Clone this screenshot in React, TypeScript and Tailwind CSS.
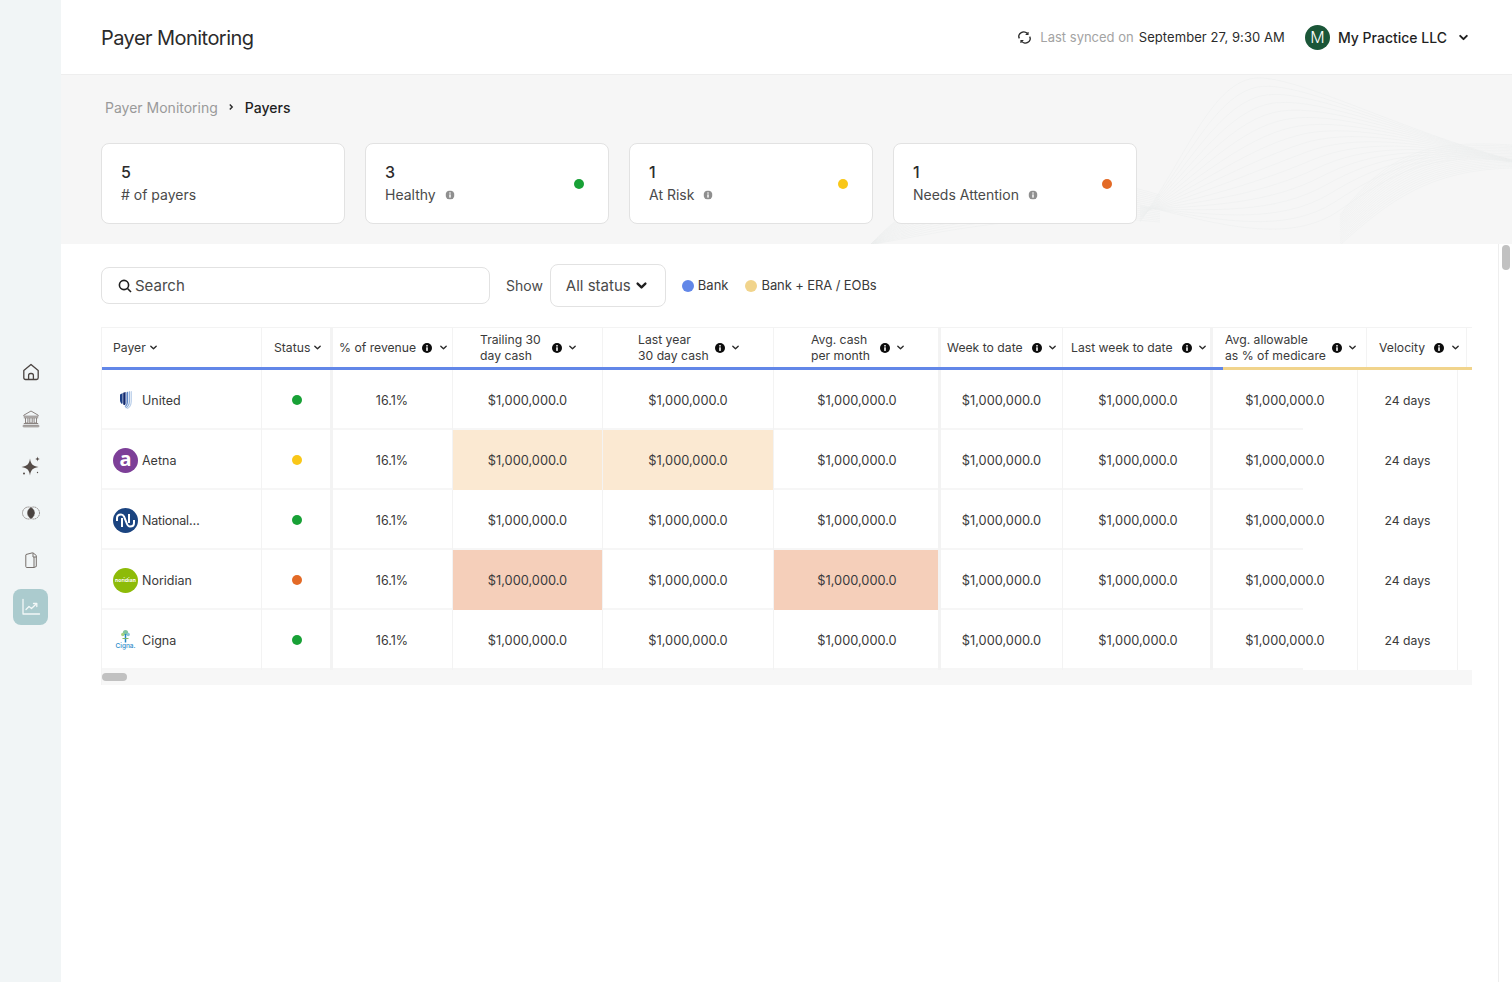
import React from "react";

const BODY = "grid grid-cols-[160px_71px_120px_150px_171px_167px_122px_150px_145px_100px_14px]";
const HEAD = "grid grid-cols-[160px_71px_120px_150px_171px_167px_122px_150px_154px_100px_5px]";

function Chevron({ className = "w-[9px] h-[9px]", sw = 2 }: { className?: string; sw?: number }) {
  return (
    <svg viewBox="0 0 10 10" className={className} fill="none" stroke="currentColor" strokeWidth={sw} strokeLinecap="round" strokeLinejoin="round">
      <path d="M2 3.5 5 6.5 8 3.5" />
    </svg>
  );
}

function Info({ gray = false }: { gray?: boolean }) {
  return (
    <svg viewBox="0 0 10 10" className="w-[10px] h-[10px] shrink-0">
      <circle cx="5" cy="5" r="5" fill={gray ? "#8f8f8f" : "#0c0c0c"} />
      <rect x="4.2" y="4.3" width="1.6" height="3.6" fill="#fff" />
      <rect x="4.2" y="2.1" width="1.6" height="1.4" fill="#fff" />
    </svg>
  );
}

function Dot({ c, size = "w-[10px] h-[10px]" }: { c: string; size?: string }) {
  return <span className={`${size} rounded-full inline-block shrink-0 ${c}`} />;
}

function United() {
  return (
    <svg viewBox="0 0 14 18" className="w-[14px] h-[18px]">
      <path d="M1 3.5C2 3 3 2.5 3.6 2V12L3 13C2 12.5 1 11 1 9Z" fill="#1b3f87" />
      <path d="M4.2 1.8 6.6 1V12.5C6.6 13.5 6 14 5 14L4.2 13.4Z" fill="#12296f" />
      <path d="M7.4 1.4 9 .6V11C9 13 8 15 6.5 16L5.5 15C7 14.5 7.4 13.5 7.4 12Z" fill="#5f86c6" />
      <path d="M9.7.8 10.9 0V11C10.9 14 9 16.5 7 17.5L6.2 16.6C8.5 15.5 9.7 13.5 9.7 11Z" fill="#8fb0dc" />
      <path d="M11.6.6 12.8 0V10.5C12.8 14.5 10.5 17 8.5 18L7.6 17.6C10 16.4 11.6 14 11.6 11Z" fill="#b5cbe8" />
    </svg>
  );
}

function Aetna() {
  return (
    <span className="w-[25px] h-[25px] rounded-full bg-[#7d3f98] text-white flex items-center justify-center font-bold text-[20px] leading-none pb-[3px] font-['Noto_Sans',sans-serif]">
      a
    </span>
  );
}

function National() {
  return (
    <svg viewBox="0 0 25 25" className="w-[25px] h-[25px]">
      <circle cx="12.5" cy="12.5" r="12.5" fill="#1b4480" />
      <path d="M4 13V10Q4 6.500 8 6.500Q10 6.500 11 8.500L14 16Q15 18.500 17 18.500Q21 18.500 21 15V12" fill="none" stroke="#fff" strokeWidth="2" />
      <path d="M9 10v9M16 6v9" stroke="#fff" strokeWidth="2" fill="none" />
    </svg>
  );
}

function Noridian() {
  return (
    <span className="w-[25px] h-[25px] rounded-full bg-[#8dbb08] text-white flex flex-col items-center justify-center overflow-hidden text-[5px] leading-none font-bold tracking-[0.1px]">
      noridian
    </span>
  );
}

function Cigna() {
  return (
    <svg viewBox="0 0 25 25" className="w-[25px] h-[25px]">
      <circle cx="12.5" cy="4.500" r="2.600" fill="#7fc4a0" />
      <circle cx="9.800" cy="6.500" r="1.700" fill="#a8d27f" />
      <circle cx="15.200" cy="6.500" r="1.700" fill="#8cc6d6" />
      <path d="M12.500 6v8.500" stroke="#1f87c4" strokeWidth="1.500" />
      <path d="M9.500 10.500h6" stroke="#7fb96a" strokeWidth="1" />
      <text x="12.5" y="19.500" textAnchor="middle" fontSize="6.500" fontWeight="500" fill="#2a8bc9" fontFamily="Inter, sans-serif">Cigna.</text>
    </svg>
  );
}

function Side({ children, active = false }: { children: React.ReactNode; active?: boolean }) {
  return (
    <div className={`w-[35px] h-[36px] rounded-lg flex items-center justify-center ${active ? "bg-[#abcbce]" : ""}`}>
      {children}
    </div>
  );
}

function Sidebar() {
  return (
    <aside className="w-[61px] shrink-0 bg-[#f1f5f6] flex flex-col items-center pt-[354px] gap-[11px] h-full">
      <Side>
        <svg viewBox="0 0 18 18" className="w-[18px] h-[18px]" fill="none" stroke="#4a4340" strokeWidth="1.3" strokeLinejoin="round">
          <path d="M1.8 7.4 9 1.5l7.2 5.9v7.4a1.7 1.7 0 0 1-1.7 1.7h-11a1.7 1.7 0 0 1-1.7-1.7Z" />
          <path d="M6.6 16.5v-4a2 2 0 0 1 2-2h.8a2 2 0 0 1 2 2v4" />
        </svg>
      </Side>
      <Side>
        <svg viewBox="0 0 18 18" className="w-[18px] h-[18px]" fill="none" stroke="#8a8380" strokeWidth="1">
          <path d="M9 1 1.8 5.2v1h14.4v-1Z" />
          <path d="M1.8 7.8h14.4M3.5 8v5h2.4V8M7.8 8v5h2.4V8M12.1 8v5h2.4V8M1.8 13.5h14.4" />
          <rect x="1" y="15.3" width="16" height="1.5" rx=".7" />
        </svg>
      </Side>
      <Side>
        <svg viewBox="0 0 20 20" className="w-[20px] h-[20px]" fill="#554c48">
          <path d="M9 2.500C9.800 8 11.500 10 17.500 11 11.500 12 9.800 14 9 19.500 8.200 14 6.500 12 .5 11 6.500 10 8.200 8 9 2.500Z" />
          <path d="M16.500.5c.2 1.600.8 2.300 2.500 2.500-1.700.2-2.300.9-2.500 2.500-.2-1.600-.8-2.300-2.500-2.500C15.700 2.800 16.300 2.100 16.500.5Z" />
          <circle cx="3" cy="17.500" r="1" />
          <circle cx="16.500" cy="16.500" r=".7" />
        </svg>
      </Side>
      <Side>
        <svg viewBox="0 0 18 18" className="w-[18px] h-[18px]" fill="none">
          <circle cx="6.500" cy="9" r="6" stroke="#8a8380" strokeWidth="1" strokeDasharray="1.500 .7" />
          <circle cx="11.500" cy="9" r="6" stroke="#8a8380" strokeWidth="1" strokeDasharray="1.500 .7" />
          <path d="M9 3.500c2.300 1.300 3.500 3.300 3.500 5.500s-1.200 4.200-3.500 5.500C6.700 13.200 5.500 11.200 5.500 9s1.200-4.200 3.500-5.500Z" fill="#4a4340" />
        </svg>
      </Side>
      <Side>
        <svg viewBox="0 0 18 18" className="w-[18px] h-[18px]" fill="none" stroke="#77706c" strokeWidth="1" strokeLinejoin="round">
          <path d="M4 3.500 10.500 1.800H11L14.300 4.500V15.500L12 16.500 4.800 16.500A1 1 0 0 1 3.800 15.500V4Z" />
          <path d="M11 2v4h3.300M12 6v10.300" />
        </svg>
      </Side>
      <Side active>
        <svg viewBox="0 0 20 20" className="w-[20px] h-[20px]" fill="none" stroke="#f3f8f8" strokeWidth="1.300" strokeLinecap="round" strokeLinejoin="round">
          <path d="M2 2.500V17h16.500" />
          <path d="M5 12.500 8 9.500l2.500 2L15.500 6.800" />
          <path d="M12.500 6.500h3.300v3" />
        </svg>
      </Side>
    </aside>
  );
}

function Header() {
  return (
    <header className="h-[75px] shrink-0 border-b border-[#eeeeee] flex items-center pl-[40px] pr-[43px] bg-white">
      <h1 className="text-[20px] text-[#2b2b2b] tracking-[-0.55px] font-normal pt-[2px]">Payer Monitoring</h1>
      <div className="ml-auto flex items-center text-[13px]">
        <svg viewBox="0 0 14 14" className="w-[13px] h-[13px] mr-[9px]" fill="none" stroke="#2b2b2b" strokeWidth="1.500">
          <path d="M1.500 8A5 4.500 0 0 1 10.500 3.500M12.500 6A5 4.500 0 0 1 3.500 10.500" />
          <path d="M10.800 1v2.800H8.200M3.200 13v-2.800h2.600" strokeWidth="1.200" />
        </svg>
        <span className="text-[#a3a3a3] pt-[2px]">Last synced on</span>
        <span className="text-[#2b2b2b] ml-[5px] pt-[2px] tracking-[0.08px]">September 27, 9:30 AM</span>
        <span className="w-[25px] h-[25px] rounded-full bg-[#1b5638] text-white flex items-center justify-center text-[16px] ml-[20px] font-light">M</span>
        <span className="ml-[8px] text-[14px] font-medium text-[#1f1f1f]">My Practice LLC</span>
        <Chevron className="w-[11px] h-[11px] ml-[11px] text-[#1f1f1f]" sw={1.800} />
      </div>
    </header>
  );
}

function Waves() {
  const n = 16;
  const paths: string[] = [];
  const lerp = (a: number, b: number, t: number) => a + (b - a) * t;
  const A = [1140, 222, 1190, 150, 1215, 75, 1262, 78, 1330, 82, 1400, 130, 1512, 160];
  const B = [1140, 205, 1220, 225, 1290, 245, 1340, 210, 1380, 175, 1430, 150, 1512, 162];
  for (let i = 0; i <= n; i++) {
    const t = i / n;
    const p = A.map((v, k) => lerp(v, B[k], t) - (k % 2 ? 0 : 61));
    paths.push(`M${p[0]} ${p[1]}C${p[2]} ${p[3]} ${p[4]} ${p[5]} ${p[6]} ${p[7]}S${p[10]} ${p[11]} ${p[12]} ${p[13]}`);
    paths.push(`M${1340 - 61} ${lerp(245, 215, t)}C${1390 - 61} ${lerp(200, 150, t)} ${1430 - 61} ${lerp(170, 140, t)} ${1512 - 61} ${lerp(168, 145, t)}`);
    paths.push(`M${870 - 61} ${245}C${950 - 61} ${lerp(160, 230, t)} ${1040 - 61} ${lerp(160, 210, t)} ${1160 - 61} ${lerp(195, 222, t)}`);
  }
  return (
    <svg className="absolute left-0 top-0 w-[1451px] h-[169px] pointer-events-none" viewBox="0 75 1451 169" fill="none" stroke="#eceeee" strokeWidth="0.550">
      {paths.map((d, i) => (
        <path key={i} d={d} />
      ))}
    </svg>
  );
}

function Stat({ n, label, dot, info = true }: { n: string; label: string; dot?: string; info?: boolean }) {
  return (
    <div className="w-[244px] h-[81px] bg-white border border-[#e2e2e2] rounded-lg flex items-center pl-[19px] pr-[24px] justify-between relative">
      <div>
        <div className="text-[16px] font-medium leading-[23px] text-[#2b2b2b]">{n}</div>
        <div className="flex items-center gap-[9px] text-[14px] leading-[22px] text-[#4a4a4a]">
          {label}
          {info && <span className="scale-90 flex"><Info gray /></span>}
        </div>
      </div>
      {dot && <Dot c={dot} />}
    </div>
  );
}

function Top() {
  return (
    <section className="relative h-[169px] shrink-0 bg-[#f6f6f6] pl-[40px] overflow-hidden">
      <Waves />
      <div className="relative flex items-center h-[64px] mb-[4px] pl-[4px] text-[14px] gap-[8.500px]">
        <span className="text-[#9a9a9a]">Payer Monitoring</span>
        <svg viewBox="0 0 10 10" className="w-[8px] h-[8px] mx-[1px]" fill="none" stroke="#2b2b2b" strokeWidth="1.800"><path d="M3.500 2 6.500 5 3.500 8" /></svg>
        <span className="text-[#1f1f1f] font-medium">Payers</span>
      </div>
      <div className="relative flex gap-[20px]">
        <Stat n="5" label="# of payers" info={false} />
        <Stat n="3" label="Healthy" dot="bg-[#18a136]" />
        <Stat n="1" label="At Risk" dot="bg-[#f9c718]" />
        <Stat n="1" label="Needs Attention" dot="bg-[#e36a26]" />
      </div>
    </section>
  );
}

function Toolbar() {
  return (
    <div className="flex items-center h-[43px] text-[#2b2b2b]">
      <div className="w-[389px] h-[37px] border border-[#e2e2e2] rounded-lg flex items-center pl-[16px] gap-[3px]">
        <svg viewBox="0 0 14 14" className="w-[14px] h-[14px]" fill="none" stroke="#1f1f1f" strokeWidth="1.600"><circle cx="6" cy="6" r="4.600" /><path d="m9.500 9.500 3.500 3.500" /></svg>
        <span className="text-[15px] text-[#4a4a4a] pt-[1px]">Search</span>
      </div>
      <span className="ml-[16px] text-[14px] text-[#4a4a4a]">Show</span>
      <div className="ml-[7px] w-[116px] h-[43px] border border-[#e2e2e2] rounded-lg flex items-center pl-[15px] gap-[4px] text-[15px] text-[#4a4a4a]">
        <span className="pt-[1px]">All status</span>
        <Chevron className="w-[13px] h-[13px] text-[#1f1f1f]" sw={1.800} />
      </div>
      <Dot c="bg-[#6287e8] ml-[16px]" size="w-[12px] h-[12px]" />
      <span className="ml-[4px] text-[13px] text-[#3a3a3a]">Bank</span>
      <Dot c="bg-[#f1d48c] ml-[17px]" size="w-[12px] h-[12px]" />
      <span className="ml-[4px] text-[13px] text-[#3a3a3a] tracking-[-0.1px]">Bank + ERA / EOBs</span>
    </div>
  );
}

type H = { l: string[]; info?: boolean; border?: string; pad?: string; gap?: string };
const heads: H[] = [
  { l: ["Payer"], pad: "pl-[11px]" },
  { l: ["Status"], pad: "pl-[12px]", border: "border-r-[3px]" },
  { l: ["% of revenue"], info: true, pad: "pl-[6px]" },
  { l: ["Trailing 30", "day cash"], info: true, pad: "pl-[27px]", gap: "ml-[11px]" },
  { l: ["Last year", "30 day cash"], info: true, pad: "pl-[35px]" },
  { l: ["Avg. cash", "per month"], info: true, pad: "pl-[37px]", border: "border-r-[3px]", gap: "ml-[10px]" },
  { l: ["Week to date"], info: true, pad: "pl-[6px]", gap: "ml-[9px]" },
  { l: ["Last week to date"], info: true, pad: "pl-[8px]", border: "border-r-[3px]", gap: "ml-[9px]" },
  { l: ["Avg. allowable", "as % of medicare"], info: true, pad: "pl-[12px]" },
  { l: ["Velocity"], info: true, pad: "pl-[12px]", gap: "ml-[9px]" },
];

function HeadCell({ h }: { h: H }) {
  return (
    <div className={`h-[39px] flex items-center border-[#f3f3f3] ${h.border ?? "border-r-[1px]"} ${h.pad}`}>
      <div className="text-[12.200px] leading-[16px] text-[#3a3a3a] whitespace-nowrap">
        {h.l.map((x) => (
          <div key={x}>{x}</div>
        ))}
      </div>
      {h.info && <span className={h.gap ?? "ml-[6px]"}><Info /></span>}
      <Chevron className={`w-[9px] h-[9px] text-[#2b2b2b] ${h.info ? "ml-[6.500px]" : "ml-[3px]"}`} sw={1.500} />
    </div>
  );
}

type Row = { name: string; nameClass?: string; logo: React.ReactNode; dot: string; hl: Record<number, string> };
const PEACH = "bg-[#fbe9d2]";
const SALMON = "bg-[#f5cfba]";
const rows: Row[] = [
  { name: "United", logo: <span className="w-[25px] flex justify-center"><United /></span>, dot: "bg-[#18a136]", hl: {} },
  { name: "Aetna", logo: <Aetna />, dot: "bg-[#f9c718]", hl: { 0: PEACH, 1: PEACH } },
  { name: "National…", nameClass: "tracking-[-0.2px]", logo: <National />, dot: "bg-[#18a136]", hl: {} },
  { name: "Noridian", logo: <Noridian />, dot: "bg-[#e36a26]", hl: { 0: SALMON, 2: SALMON } },
  { name: "Cigna", logo: <Cigna />, dot: "bg-[#18a136]", hl: {} },
];

function Cell({ children, border = "border-r-[1px]", hl, line = "w-full", className = "justify-center", size = "text-[12.800px]" }: { children?: React.ReactNode; border?: string; hl?: string; line?: string; className?: string; size?: string }) {
  return (
    <div className={`flex flex-col border-[#f3f3f3] h-[60px] ${border} ${hl ?? ""}`}>
      <div className={`flex-1 flex items-center pt-[3px] text-[#3a3a3a] ${size} ${className}`}>{children}</div>
      <div className={`h-[2px] ${hl ? "" : "bg-[#f6f6f6]"} ${line}`} />
    </div>
  );
}

function Table() {
  const money = "$1,000,000.0";
  return (
    <div className="mt-[20px] w-[1371px] border-l border-[#f3f3f3]">
      <div className={`${HEAD} border-t border-[#f3f3f3]`}>
        {heads.map((h, i) => (
          <HeadCell key={i} h={h} />
        ))}
        <div />
      </div>
      <div className="flex h-[3px]">
        <div className="w-[1121px] bg-[#6287e8]" />
        <div className="flex-1 bg-[#f1d48c]" />
      </div>
      {rows.map((r) => (
        <div key={r.name} className={BODY}>
          <Cell className="justify-start pl-[11px] gap-[4px] pb-[1px]" size="text-[12.500px]">
            {r.logo}
            <span className={`pt-[3px] ${r.nameClass ?? ""}`}>{r.name}</span>
          </Cell>
          <Cell border="border-r-[3px]" className="justify-center pl-[2px] pb-[1px]"><Dot c={r.dot} /></Cell>
          <Cell className="justify-center pr-[1px]" size="text-[12.500px]"><span className="pt-[2px]">16.1%</span></Cell>
          <Cell hl={r.hl[0]}>{money}</Cell>
          <Cell hl={r.hl[1]}>{money}</Cell>
          <Cell hl={r.hl[2]} border="border-r-[3px]" className="justify-center pl-[2px]">{money}</Cell>
          <Cell>{money}</Cell>
          <Cell border="border-r-[3px]" className="justify-center pl-[3px]">{money}</Cell>
          <Cell line="w-[90px]">{money}</Cell>
          <Cell line="w-0" size="text-[12.200px]"><span className="pt-[2px]">24 days</span></Cell>
          <Cell border="border-r-0" line="w-0" />
        </div>
      ))}
      <div className="h-[15px] bg-[#f7f7f7] flex items-start pt-[3px]">
        <div className="w-[25px] h-[8px] rounded-full bg-[#c1c1c1]" />
      </div>
    </div>
  );
}

export default function App() {
  return (
    <div className="flex w-[1512px] h-[982px] overflow-hidden bg-white font-['Inter',sans-serif]">
      <Sidebar />
      <main className="flex-1 flex flex-col h-full">
        <Header />
        <Top />
        <div className="relative flex-1 pl-[40px] pt-[20px]">
          <Toolbar />
          <Table />
          <div className="absolute right-0 top-0 bottom-0 w-[14px] border-l border-[#eeeeee] flex justify-center pt-[1px]">
            <div className="w-[8px] h-[25px] rounded-full bg-[#c1c1c1]" />
          </div>
        </div>
      </main>
    </div>
  );
}
